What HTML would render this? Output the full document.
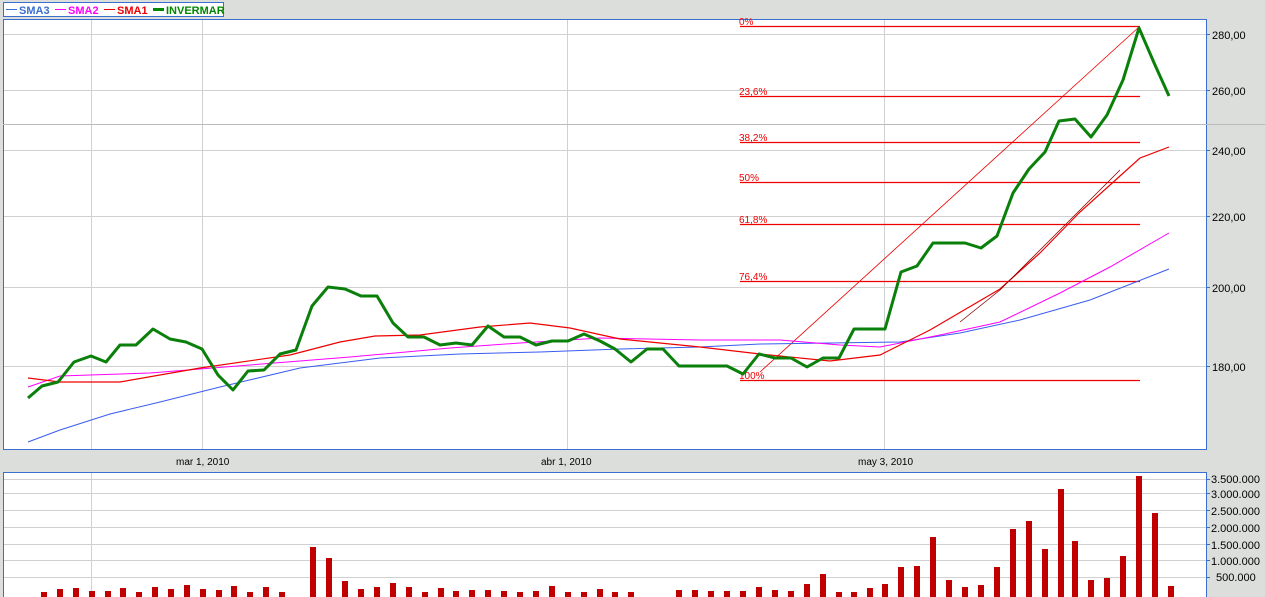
<!DOCTYPE html>
<html><head><style>
body{margin:0;background:#dcdedc;width:1265px;height:597px;overflow:hidden;font-family:"Liberation Sans",sans-serif}
svg{display:block}
</style></head><body>
<svg width="1265" height="597" xmlns="http://www.w3.org/2000/svg" font-family="Liberation Sans, sans-serif">
<rect width="1265" height="597" fill="#dcdedc"/>
<!-- legend -->
<rect x="3.5" y="2.5" width="220" height="14" fill="#fff" stroke="#3a6fd0"/>
<line x1="6" y1="9.5" x2="17" y2="9.5" stroke="#3a6fd0"/><text x="19" y="14" font-size="11" font-weight="bold" fill="#3a6fd0">SMA3</text>
<line x1="55" y1="9.5" x2="66" y2="9.5" stroke="#f0f"/><text x="68" y="14" font-size="11" font-weight="bold" fill="#f0f">SMA2</text>
<line x1="104" y1="9.5" x2="115" y2="9.5" stroke="#e00"/><text x="117" y="14" font-size="11" font-weight="bold" fill="#e00">SMA1</text>
<line x1="153" y1="9.5" x2="164" y2="9.5" stroke="#080" stroke-width="3"/><text x="166" y="14" font-size="11" font-weight="bold" fill="#080">INVERMAR</text>
<!-- main plot -->
<rect x="3.5" y="19.5" width="1203" height="430" fill="#fff" stroke="#3a6fd0"/>
<g stroke="#d0d0d0" stroke-width="1">
<line x1="4" y1="34.5" x2="1206" y2="34.5"/><line x1="4" y1="90.5" x2="1206" y2="90.5"/><line x1="4" y1="124.5" x2="1265" y2="124.5"/>
<line x1="4" y1="150.5" x2="1206" y2="150.5"/><line x1="4" y1="216.5" x2="1206" y2="216.5"/><line x1="4" y1="287.5" x2="1206" y2="287.5"/><line x1="4" y1="366.5" x2="1206" y2="366.5"/>
<line x1="91.5" y1="20" x2="91.5" y2="449"/><line x1="202.5" y1="20" x2="202.5" y2="449"/><line x1="567.5" y1="20" x2="567.5" y2="449"/><line x1="884.5" y1="20" x2="884.5" y2="449"/>
</g>
<line x1="3" y1="124.5" x2="1265" y2="124.5" stroke="#bbb"/>
<!-- fib -->
<g stroke="#e00" stroke-width="1.2">
<line x1="740" y1="26.5" x2="1140" y2="26.5"/><line x1="740" y1="96.5" x2="1140" y2="96.5"/><line x1="740" y1="142.5" x2="1140" y2="142.5"/><line x1="740" y1="182.5" x2="1140" y2="182.5"/><line x1="740" y1="224.5" x2="1140" y2="224.5"/><line x1="740" y1="281.5" x2="1140" y2="281.5"/><line x1="740" y1="380.5" x2="1140" y2="380.5"/>
</g>
<line x1="760" y1="372" x2="1139" y2="27" stroke="#e00" stroke-width="0.8"/>
<g font-size="10" fill="#e00">
<text x="739" y="25">0%</text><text x="739" y="95">23,6%</text><text x="739" y="141">38,2%</text><text x="739" y="181">50%</text><text x="739" y="223">61,8%</text><text x="739" y="280">76,4%</text><text x="739" y="379">100%</text>
</g>
<polyline fill="none" stroke="#3a5cf0" stroke-width="1" points="28,442 60,430 110,414 160,402 220,387 300,368 380,358 460,354 540,352 620,349 700,347 760,344 830,343 900,342 960,333 1020,320 1090,300 1169,269"/>
<polyline fill="none" stroke="#f0f" stroke-width="1" points="28,387 60,376 150,373 250,365 350,357 450,348 520,343 600,338 700,340 780,340 840,345 880,347 940,335 1000,322 1060,293 1110,267 1169,233"/>
<polyline fill="none" stroke="#e00" stroke-width="1.2" points="28,378 60,382 120,382 200,368 290,355 340,342 375,336 420,335 480,327 530,323 570,328 620,339 700,347 760,354 830,361 880,355 930,330 1000,289 1040,253 1080,212 1120,176 1140,158 1169,147"/>
<polyline fill="none" stroke="#800" stroke-width="0.8" points="960,322 1000,290 1040,250 1080,210 1120,170"/>
<polyline fill="none" stroke="#0a800a" stroke-width="3" stroke-linejoin="round" points="28,398 42,386 58,382 74,362 91,356 106,362 120,345 136,345 153,329 170,339 186,342 202,349 218,375 233,390 248,371 264,370 280,354 296,350 312,306 328,287 345,289 361,296 377,296 393,323 408,337 424,337 440,345 456,343 472,345 488,326 504,337 520,337 536,345 552,341 568,341 584,334 600,341 615,349 631,362 647,349 663,349 679,366 695,366 711,366 727,366 743,374 759,354 775,358 791,358 807,367 823,358 839,358 854,329 870,329 885,329 901,272 917,266 933,243 949,243 965,243 981,248 997,236 1013,193 1029,169 1045,152 1059,121 1075,119 1091,137 1107,115 1123,80 1139,28 1155,65 1169,96"/>
<!-- axis labels -->
<g stroke="#3a6fd0"><line x1="1206" y1="34.5" x2="1210" y2="34.5"/><line x1="1206" y1="90.5" x2="1210" y2="90.5"/><line x1="1206" y1="150.5" x2="1210" y2="150.5"/><line x1="1206" y1="216.5" x2="1210" y2="216.5"/><line x1="1206" y1="287.5" x2="1210" y2="287.5"/><line x1="1206" y1="366.5" x2="1210" y2="366.5"/></g>
<g font-size="11" fill="#000">
<text x="1212" y="39">280,00</text><text x="1212" y="95">260,00</text><text x="1212" y="155">240,00</text><text x="1212" y="221">220,00</text><text x="1212" y="292">200,00</text><text x="1212" y="371">180,00</text>
<text x="176" y="465" font-size="10">mar 1, 2010</text><text x="541" y="465" font-size="10">abr 1, 2010</text><text x="858" y="465" font-size="10">may 3, 2010</text>
</g>
<!-- volume -->
<rect x="3.5" y="472.5" width="1203" height="130" fill="#fff" stroke="#3a6fd0"/>
<g stroke="#d0d0d0"><line x1="4" y1="479.5" x2="1206" y2="479.5"/><line x1="4" y1="493.5" x2="1206" y2="493.5"/><line x1="4" y1="510.5" x2="1206" y2="510.5"/><line x1="4" y1="527.5" x2="1206" y2="527.5"/><line x1="4" y1="544.5" x2="1206" y2="544.5"/><line x1="4" y1="560.5" x2="1206" y2="560.5"/><line x1="4" y1="577.5" x2="1206" y2="577.5"/><line x1="91.5" y1="473" x2="91.5" y2="597"/></g>
<g stroke="#3a6fd0"><line x1="1206" y1="479.5" x2="1210" y2="479.5"/><line x1="1206" y1="493.5" x2="1210" y2="493.5"/><line x1="1206" y1="510.5" x2="1210" y2="510.5"/><line x1="1206" y1="527.5" x2="1210" y2="527.5"/><line x1="1206" y1="544.5" x2="1210" y2="544.5"/><line x1="1206" y1="560.5" x2="1210" y2="560.5"/><line x1="1206" y1="577.5" x2="1210" y2="577.5"/></g>
<g font-size="11" fill="#000">
<text x="1211" y="483">3.500.000</text><text x="1211" y="498">3.000.000</text><text x="1211" y="515">2.500.000</text><text x="1211" y="532">2.000.000</text><text x="1211" y="549">1.500.000</text><text x="1211" y="565">1.000.000</text><text x="1216" y="581">500.000</text>
</g>
<g fill="#c00000" id="bars"></g>
</svg>
<script>
var d=[[44,592],[60,589],[76,588],[92,591],[108,591],[123,588],[139,592],[155,587],[171,589],[187,585],[203,589],[219,590],[234,586],[250,592],[266,587],[282,592],[313,547],[329,558],[345,581],[361,589],[377,587],[393,583],[409,587],[425,592],[441,588],[456,591],[472,590],[488,590],[504,591],[520,592],[536,591],[552,586],[568,592],[584,592],[600,589],[615,592],[631,592],[679,590],[695,590],[711,591],[727,591],[743,591],[759,587],[775,590],[791,591],[807,584],[823,574],[839,592],[854,592],[870,588],[885,584],[901,567],[917,566],[933,537],[949,580],[965,587],[981,585],[997,567],[1013,529],[1029,521],[1045,549],[1061,489],[1075,541],[1091,580],[1107,578],[1123,556],[1139,476],[1155,513],[1171,586]];
var g=document.getElementById('bars'),s='';
d.forEach(function(p){s+='<rect x="'+(p[0]-3)+'" y="'+p[1]+'" width="6" height="'+(597-p[1])+'"/>';});
g.innerHTML=s;
</script>
</body></html>
